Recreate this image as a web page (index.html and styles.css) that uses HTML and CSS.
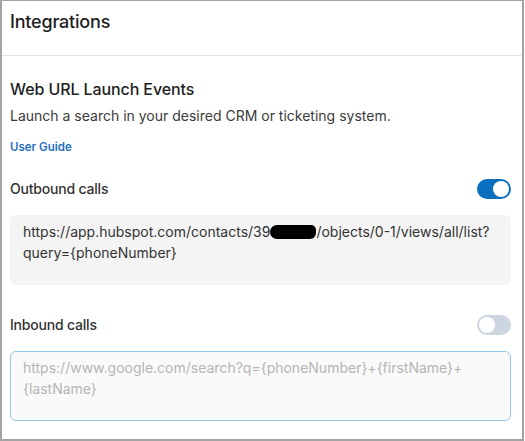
FILE: index.html
```html
<!DOCTYPE html>
<html lang="en">
<head>
<meta charset="utf-8">
<title>Integrations</title>
<link rel="stylesheet" href="styles.css">
</head>
<body>
<div class="frame">
  <header class="header">
    <h1 class="title">Integrations</h1>
  </header>
  <section class="content">
    <h2 class="section-title">Web URL Launch Events</h2>
    <p class="desc">Launch a search in your desired CRM or ticketing system.</p>
    <a class="guide" href="#">User Guide</a>

    <div class="row row-first">
      <span class="label">Outbound calls</span>
      <span class="toggle on"><span class="knob"></span></span>
    </div>
    <div class="field filled">https://app.hubspot.com/contacts/39<span class="redact" aria-hidden="true"></span>/objects/0-1/views/all/list?<br>query={phoneNumber}</div>

    <div class="row row-second">
      <span class="label">Inbound calls</span>
      <span class="toggle off"><span class="knob"></span></span>
    </div>
    <div class="field empty">https://www.google.com/search?q={phoneNumber}+{firstName}+<br>{lastName}</div>
  </section>
</div>
</body>
</html>
```

FILE: styles.css
```css
html, body {
  margin: 0;
  padding: 0;
  background: #ffffff;
}

body {
  font-family: Inter, "Noto Sans", "Liberation Sans", sans-serif;
  color: #2e2e2e;
}

.frame {
  box-sizing: border-box;
  width: 524px;
  height: 441px;
  border-top: 1px solid #a3a3a3;
  border-left: 2px solid #a3a3a3;
  border-right: 2px solid #a3a3a3;
  border-bottom: 2px solid #a3a3a3;
  overflow: hidden;
}

.header {
  height: 55px;
  box-sizing: border-box;
  padding: 9px 8px 0;
  border-bottom: 1px solid #dfe5ec;
}

.title {
  margin: 0;
  font-size: 18px;
  line-height: 24px;
  font-weight: 500;
  letter-spacing: -0.2px;
  color: #1e1e1e;
}

.content {
  padding: 22px 11px 0 8px;
  display: flex;
  flex-direction: column;
}

.section-title {
  margin: 0;
  font-size: 16px;
  line-height: 22px;
  font-weight: 500;
  letter-spacing: -0.1px;
  color: #1e1e1e;
}

.desc {
  margin: 6px 0 0;
  font-size: 14px;
  line-height: 20px;
  color: #3a3a3a;
}

.guide {
  margin-top: 13px;
  align-self: flex-start;
  font-size: 11.5px;
  line-height: 16px;
  font-weight: 600;
  color: #1f6fc0;
  text-decoration: none;
}

.row {
  display: flex;
  align-items: center;
  justify-content: space-between;
  height: 21px;
}

.row-first {
  margin-top: 23px;
}

.row-second {
  margin-top: 29px;
}

.label {
  padding-top: 1px;
  font-size: 14px;
  line-height: 20px;
  font-weight: 500;
  letter-spacing: -0.2px;
  color: #333333;
}

.toggle {
  width: 34px;
  height: 20px;
  border-radius: 10px;
  display: flex;
  align-items: center;
  padding: 0 2px;
  box-sizing: border-box;
}

.toggle .knob {
  width: 16px;
  height: 16px;
  border-radius: 50%;
  background: #ffffff;
}

.toggle.on {
  background: #0a6fbf;
  justify-content: flex-end;
}

.toggle.off {
  background: #ccd6e0;
  justify-content: flex-start;
}

.field {
  margin-top: 16px;
  box-sizing: border-box;
  height: 70px;
  border-radius: 6px;
  padding: 6px 13px;
  font-size: 14px;
  line-height: 21px;
  white-space: nowrap;
}

.field.filled {
  background: #f4f4f4;
  color: #333333;
}

.field.empty {
  background: #fafafa;
  border: 1px solid #92cbe9;
  padding: 5px 12px;
  color: #b5b5b5;
}

.redact {
  display: inline-block;
  width: 46px;
  height: 14px;
  vertical-align: -2px;
  background: #000000;
  border-radius: 7px 5px 6px 7px;
}
```
